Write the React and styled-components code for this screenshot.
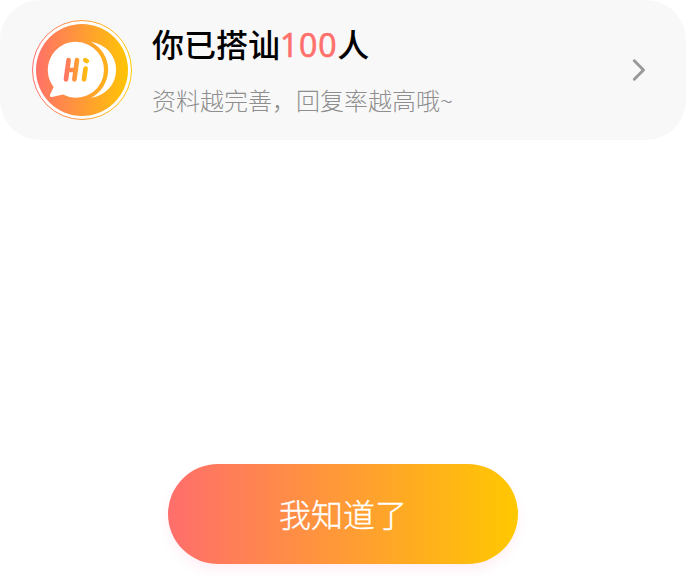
import React from 'react';
import styled, { createGlobalStyle } from 'styled-components';

const GlobalStyle = createGlobalStyle`
  * { box-sizing: border-box; }
  body {
    margin: 0;
    background: #fff;
    font-family: "Noto Sans CJK SC", "Noto Sans", sans-serif;
  }
`;

const Screen = styled.main`
  width: 686px;
  height: 576px;
  display: flex;
  flex-direction: column;
  align-items: center;
  justify-content: space-between;
  padding-bottom: 12px;
  overflow: hidden;
`;

const Card = styled.section`
  width: 100%;
  height: 140px;
  display: flex;
  align-items: center;
  padding: 0 39px 0 32px;
  background: #f8f8f8;
  border-radius: 40px;
`;

const Avatar = styled.svg`
  width: 100px;
  height: 100px;
  flex: none;
`;

const Copy = styled.div`
  flex: 1;
  height: 100px;
  margin-left: 20px;
  white-space: nowrap;
`;

const Title = styled.h1`
  margin: 0;
  height: 46px;
  font-size: 32px;
  line-height: 46px;
  font-weight: 500;
  color: #000;
`;

const Count = styled.span`
  color: #ff706c;
  font-family: "Open Sans", "Noto Sans", sans-serif;
  letter-spacing: 0.8px;
  -webkit-text-stroke: 0.7px #ff706c;
`;

const Hint = styled.p`
  margin: 17px 0 0;
  font-size: 24px;
  line-height: 34px;
  font-weight: 300;
  color: #8e8e8e;
`;

const Chevron = styled.svg`
  width: 16px;
  height: 24px;
  flex: none;
`;

const ConfirmButton = styled.button`
  width: 350px;
  height: 100px;
  padding: 0 0 3px;
  border: 0;
  border-radius: 50px;
  background: linear-gradient(90deg, #ff6e6c 0%, #ff9a36 50%, #ffc800 100%);
  box-shadow: 0 6px 12px rgba(255, 100, 160, 0.1);
  color: #fff;
  font-family: inherit;
  font-size: 32px;
  line-height: 46px;
  font-weight: 300;
  -webkit-text-stroke: 0.35px #fff;
`;

function HiIcon() {
  return (
    <Avatar viewBox="0 0 100 100" aria-hidden="true">
      <defs>
        <linearGradient id="warm" gradientUnits="userSpaceOnUse" x1="0" y1="50" x2="100" y2="50">
          <stop offset="0" stopColor="#ff6e6c" />
          <stop offset="0.5" stopColor="#ff9a36" />
          <stop offset="1" stopColor="#ffc800" />
        </linearGradient>
        <linearGradient id="letters" gradientUnits="userSpaceOnUse" x1="31" y1="50" x2="58" y2="50">
          <stop offset="0" stopColor="#ff6e6c" />
          <stop offset="1" stopColor="#ffc800" />
        </linearGradient>
      </defs>
      <circle cx="50" cy="50" r="49.5" fill="#fff" stroke="url(#warm)" />
      <circle cx="50" cy="50" r="46" fill="url(#warm)" />
      <path d="M59 22A28 28 0 0 1 59 77.7A31.2 31.2 0 0 0 59 22Z" fill="#fff" />
      <path d="M44 21.8A28 28 0 1 1 31 74.6L20 77Q17 77.3 18.3 74L21.7 67A28 28 0 0 1 44 21.8Z" fill="#fff" />
      <g fill="none" stroke="url(#letters)" strokeWidth="4.7" strokeLinecap="round">
        <path d="M36.6 40.2L34 59.3M45 40.2L42.4 59.3M35 50H44" />
        <path d="M53.6 48.5L52 59.3M53.3 40.2L54.8 41" />
      </g>
    </Avatar>
  );
}

export default function App() {
  return (
    <>
      <GlobalStyle />
      <Screen>
        <Card>
          <HiIcon />
          <Copy>
            <Title>你已搭讪<Count>100</Count>人</Title>
            <Hint>资料越完善，回复率越高哦~</Hint>
          </Copy>
          <Chevron viewBox="0 0 16 24" aria-hidden="true">
            <path d="M3.3 2.8L12.5 12L3.3 21.2" fill="none" stroke="#999" strokeWidth="3" strokeLinecap="round" strokeLinejoin="round" />
          </Chevron>
        </Card>
        <ConfirmButton type="button">我知道了</ConfirmButton>
      </Screen>
    </>
  );
}
